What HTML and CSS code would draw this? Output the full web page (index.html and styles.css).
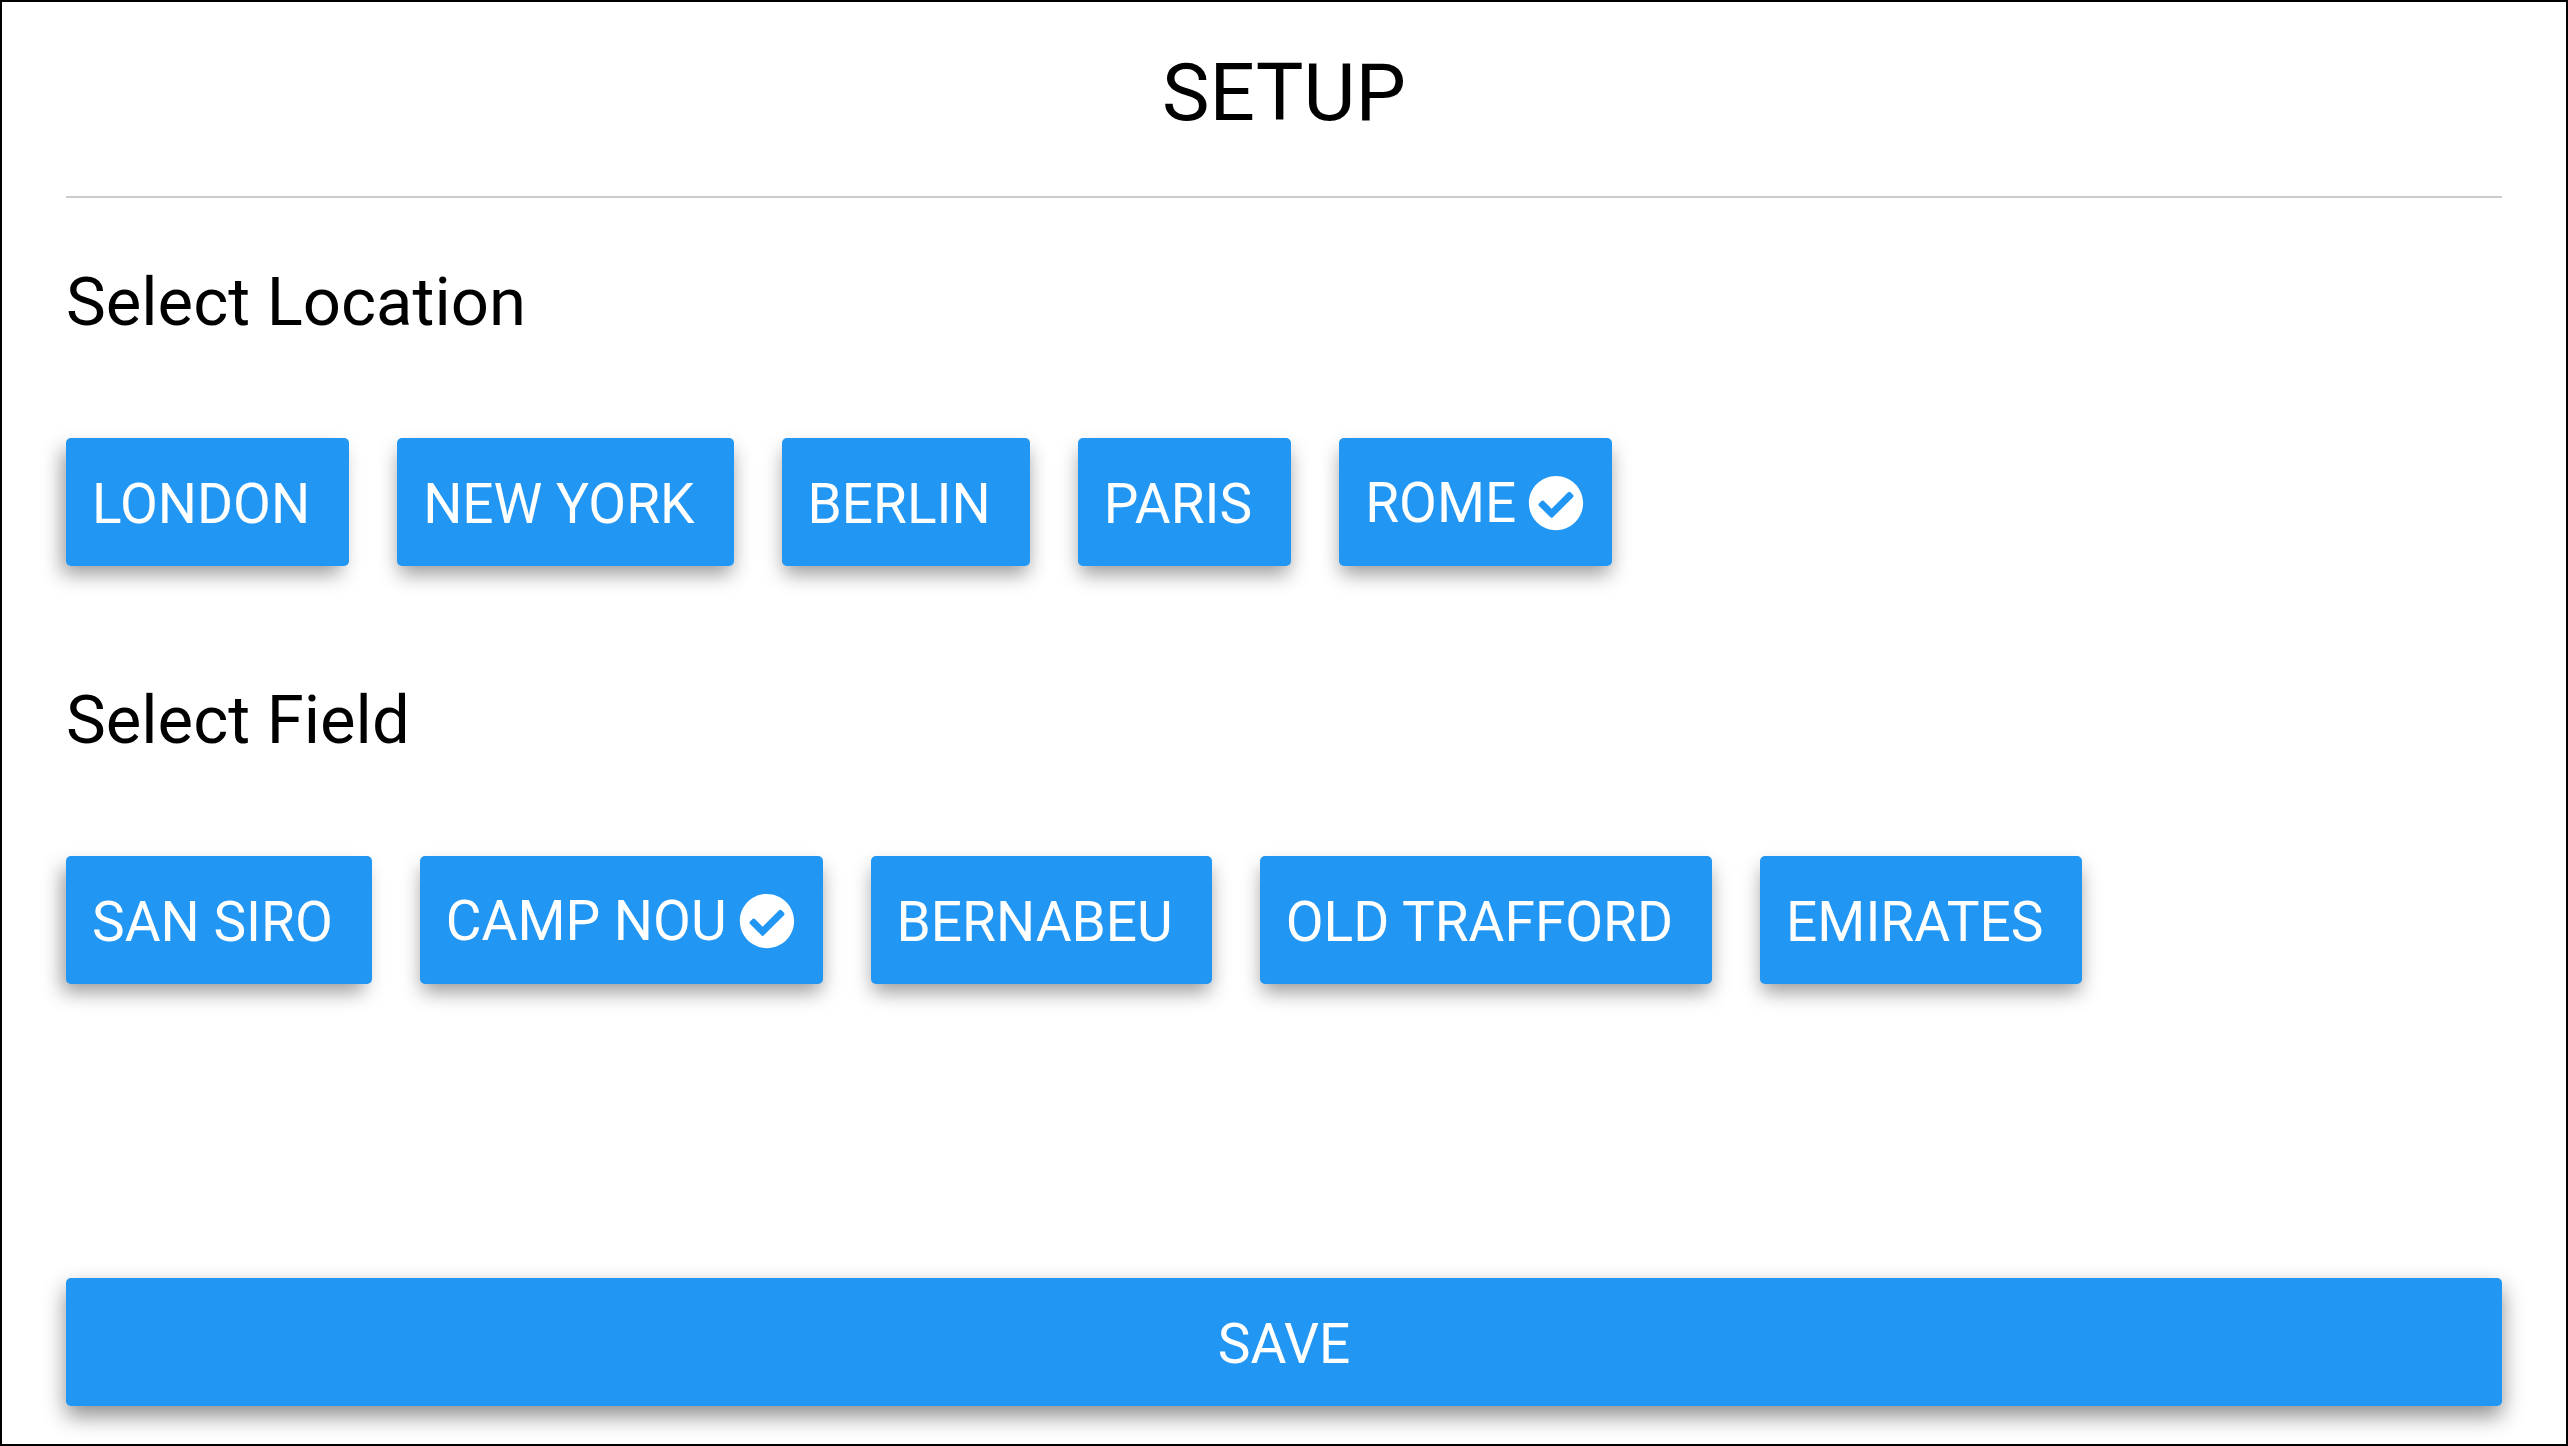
FILE: index.html
```html
<!DOCTYPE html>
<html lang="en">
  <head>
    <meta charset="UTF-8" />
    <meta name="viewport" content="width=device-width, initial-scale=1.0" />
    <title>Setup</title>
    <link rel="stylesheet" href="styles.css">
  </head>
  <body>
    <header>
      <h1>SETUP</h1>
    </header>

    <main>
      <section>
        <h2>Select Location</h2>
        <div class="options">
          <button type="button" class="option">LONDON</button>
          <button type="button" class="option">NEW YORK</button>
          <button type="button" class="option">BERLIN</button>
          <button type="button" class="option">PARIS</button>
          <button type="button" class="option selected" aria-pressed="true">
            ROME
            <svg class="check" viewBox="0 0 512 512" aria-hidden="true">
              <path d="M504 256c0 136.967-111.033 248-248 248S8 392.967 8 256 119.033 8 256 8s248 111.033 248 248zM227.314 387.314l184-184c6.248-6.248 6.248-16.379 0-22.627l-22.627-22.627c-6.248-6.249-16.379-6.249-22.628 0L216 308.118l-70.059-70.059c-6.248-6.248-16.379-6.248-22.628 0l-22.627 22.627c-6.248 6.248-6.248 16.379 0 22.627l104 104c6.249 6.249 16.379 6.249 22.628.001z" />
            </svg>
          </button>
        </div>
      </section>

      <section>
        <h2>Select Field</h2>
        <div class="options">
          <button type="button" class="option">SAN SIRO</button>
          <button type="button" class="option selected" aria-pressed="true">
            CAMP NOU
            <svg class="check" viewBox="0 0 512 512" aria-hidden="true">
              <path d="M504 256c0 136.967-111.033 248-248 248S8 392.967 8 256 119.033 8 256 8s248 111.033 248 248zM227.314 387.314l184-184c6.248-6.248 6.248-16.379 0-22.627l-22.627-22.627c-6.248-6.249-16.379-6.249-22.628 0L216 308.118l-70.059-70.059c-6.248-6.248-16.379-6.248-22.628 0l-22.627 22.627c-6.248 6.248-6.248 16.379 0 22.627l104 104c6.249 6.249 16.379 6.249 22.628.001z" />
            </svg>
          </button>
          <button type="button" class="option">BERNABEU</button>
          <button type="button" class="option">OLD TRAFFORD</button>
          <button type="button" class="option">EMIRATES</button>
        </div>
      </section>
    </main>

    <footer>
      <button type="button" class="save">SAVE</button>
    </footer>
  </body>
</html>
```
FILE: styles.css
```css
* {
  box-sizing: border-box;
}
body {
  display: flex;
  flex-direction: column;
  min-height: 100vh;
  margin: 0;
  padding: 0 64px 38px;
  border: 2px solid #000;
  background-color: #fff;
  color: #000;
  font-family: Roboto, sans-serif;
}
header {
  padding: 43px 0 55px;
  border-bottom: 2px solid #ccc;
  text-align: center;
}
h1,
h2 {
  margin: 0;
  font-weight: 400;
}
h1 {
  font-size: 80px;
  line-height: 96px;
}
h2 {
  font-size: 67px;
  line-height: 80px;
}
section {
  padding-top: 64px;
}
section + section {
  padding-top: 114px;
}
.options {
  display: flex;
  flex-wrap: wrap;
  gap: 48px;
  margin-top: 96px;
}
button {
  height: 128px;
  padding: 4px 0 0;
  border: none;
  border-radius: 5px;
  background-color: #2196f3;
  box-shadow: 0 10px 22px rgba(0, 0, 0, 0.45);
  color: #fff;
  font-family: inherit;
  font-size: 55px;
  cursor: pointer;
}
.option {
  padding: 4px 39px 0 26px;
  box-shadow: 0 10px 20px -2px rgba(0, 0, 0, 0.4);
}
.option:first-child {
  box-shadow: -6px 10px 20px -2px rgba(0, 0, 0, 0.4);
}
.option.selected {
  display: flex;
  align-items: center;
  gap: 12px;
  padding: 2px 28px 0 26px;
}
.check {
  width: 56px;
  height: 56px;
  fill: #fff;
}
footer {
  margin-top: auto;
}
.save {
  width: 100%;
}
```
